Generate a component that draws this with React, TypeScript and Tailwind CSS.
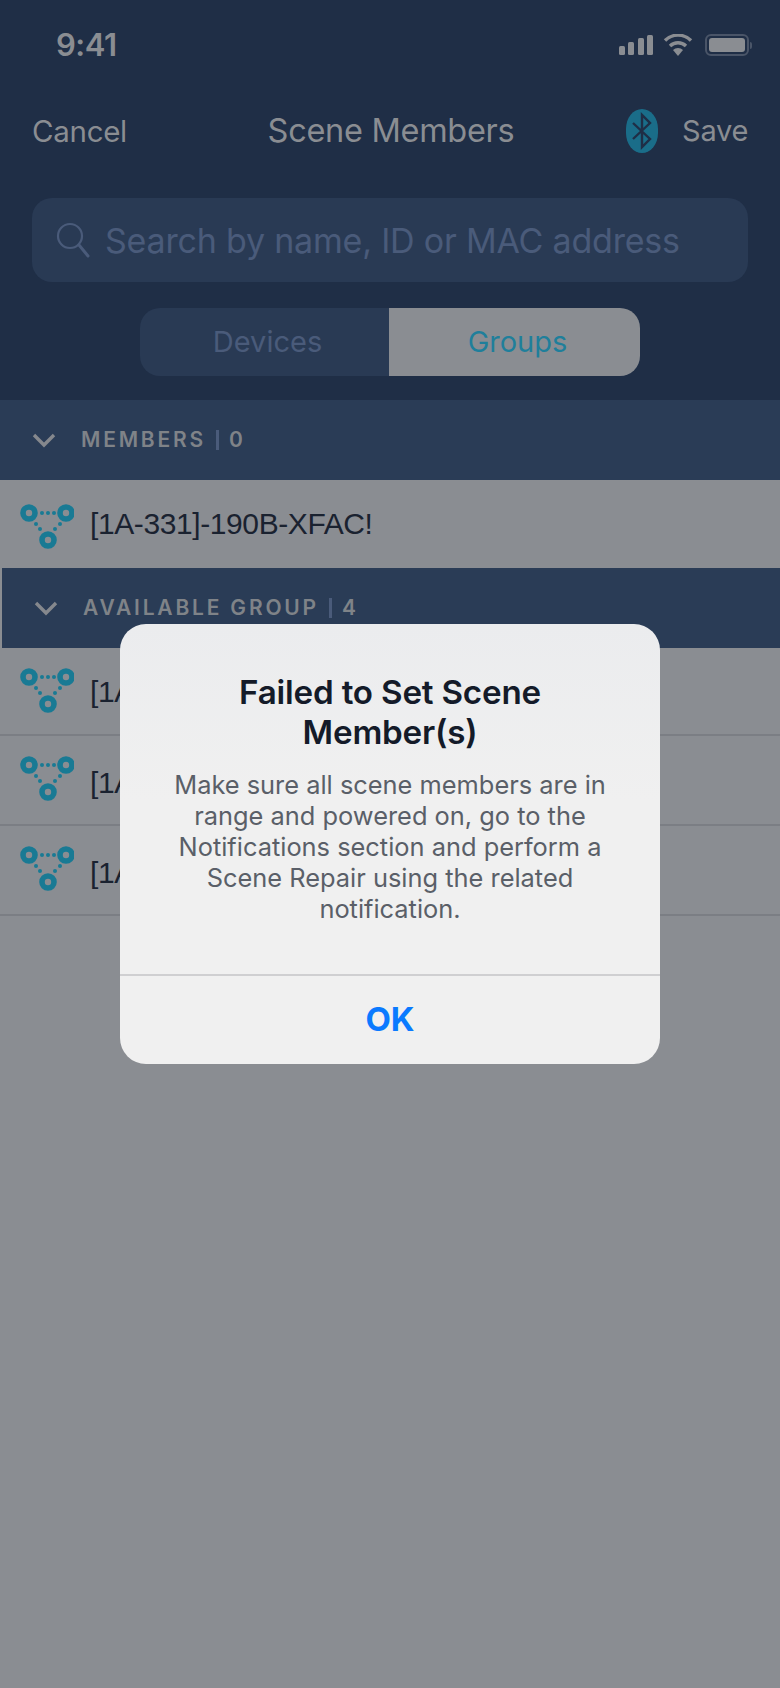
const sans = "font-['Inter','Noto_Sans',sans-serif]";

function GroupIcon({ className }: { className: string }) {
  return (
    <svg width="54" height="46" viewBox="0 0 54 46" className={className}>
      <circle cx="9" cy="9" r="6" fill="none" stroke="#197a94" strokeWidth="5.6" />
      <circle cx="46" cy="9" r="6" fill="none" stroke="#197a94" strokeWidth="5.6" />
      <circle cx="28" cy="36" r="6" fill="none" stroke="#197a94" strokeWidth="5.6" />
      <g fill="#197a94">
        <circle cx="22" cy="9" r="2" />
        <circle cx="28" cy="9" r="2" />
        <circle cx="34" cy="9" r="2" />
        <circle cx="16" cy="20" r="2" />
        <circle cx="20" cy="25" r="2" />
        <circle cx="40" cy="20" r="2" />
        <circle cx="35" cy="25" r="2" />
      </g>
    </svg>
  );
}

function Chevron() {
  return (
    <svg width="24" height="16" viewBox="0 0 24 16" className="shrink-0">
      <path d="M2 3l10 10L22 3" fill="none" stroke="#85888d" strokeWidth="3.4" />
    </svg>
  );
}

function SectionHeader({ label, count, inset }: { label: string; count: string; inset?: boolean }) {
  return (
    <div className={inset ? "ml-[2px] flex h-[80px] items-center gap-[25px] bg-[#2a3c56] pl-[32px]" : "flex h-[80px] items-center gap-[25px] bg-[#2a3c56] pl-[32px]"}>
      <Chevron />
      <div className="flex items-center text-[21px] font-semibold tracking-[2.8px] text-[#7f8388]">
        <span>{label}</span>
        <span className="mx-[10px] h-[20px] w-[3px] bg-[#4a5b7a]" />
        <span>{count}</span>
      </div>
    </div>
  );
}

const rowStyles = {
  member: { box: "flex h-[88px] items-center gap-[16px] pl-[20px]", icon: "mt-[6px] shrink-0", label: "-mt-[2px]" },
  first: { box: "flex h-[88px] items-center gap-[16px] border-b-2 border-[#7b7e84] pl-[20px]", icon: "shrink-0", label: "" },
  tall: { box: "flex h-[90px] items-center gap-[16px] border-b-2 border-[#7b7e84] pl-[20px]", icon: "mb-[2px] shrink-0", label: "mt-[4px]" },
};

function Row({ text, kind }: { text: string; kind: keyof typeof rowStyles }) {
  const s = rowStyles[kind];
  return (
    <div className={s.box}>
      <GroupIcon className={s.icon} />
      <span className={`font-['Liberation_Sans',sans-serif] text-[30px] tracking-[-0.4px] text-[#1a2230] ${s.label}`}>{text}</span>
    </div>
  );
}

export default function App() {
  return (
    <div className={`relative h-[1688px] w-[780px] overflow-hidden bg-[#8a8d92] ${sans}`}>
      <div className="bg-[#1f2e46] px-[32px]">
        <div className="-mr-[4px] flex h-[90px] items-center justify-between pl-[24px]">
          <span className="text-[31px] font-semibold tracking-[-0.5px] text-[#8a8d92]">9:41</span>
          <div className="flex items-center gap-[10px]">
            <div className="flex h-[20px] items-end gap-[3.5px]">
              <div className="h-[9px] w-[6px] rounded-[1.5px] bg-[#8a8d92]" />
              <div className="h-[13px] w-[6px] rounded-[1.5px] bg-[#8a8d92]" />
              <div className="h-[17px] w-[6px] rounded-[1.5px] bg-[#8a8d92]" />
              <div className="h-[20px] w-[6px] rounded-[1.5px] bg-[#8a8d92]" />
            </div>
            <svg width="30" height="22" viewBox="0 0 30 22">
              <path d="M15 22l-5-6a7 7 0 0 1 10 0z" fill="#8a8d92" />
              <path d="M7 12a11.5 11.5 0 0 1 16 0" fill="none" stroke="#8a8d92" strokeWidth="3.4" />
              <path d="M2 6.500a18.500 18.500 0 0 1 26 0" fill="none" stroke="#8a8d92" strokeWidth="3.4" />
            </svg>
            <div className="ml-[2px] flex items-center">
              <div className="flex h-[22px] w-[44px] items-center rounded-[6px] border-2 border-[#4a5568] p-[2px]">
                <div className="h-full w-full rounded-[3px] bg-[#8a8d92]" />
              </div>
              <div className="ml-[1px] h-[7px] w-[2px] rounded-r-[2px] bg-[#4a5568]" />
            </div>
          </div>
        </div>
        <div className="flex h-[82px] items-center justify-between">
          <span className="w-[200px] text-[29.500px] tracking-[-0.3px] text-[#8a8d92]">Cancel</span>
          <span className="pl-[2px] text-[32.500px] tracking-[-0.3px] text-[#8a8d92]">Scene Members</span>
          <div className="flex w-[200px] items-center justify-end gap-[24px]">
            <svg width="32" height="44" viewBox="0 0 32 44">
              <rect width="32" height="44" rx="16" ry="20" fill="#1a6d89" />
              <path d="M7 14l17 16-8 8V6l8 8-17 16" fill="none" stroke="#1f2e46" strokeWidth="2.4" />
            </svg>
            <span className="text-[29px] tracking-[-0.3px] text-[#8a8d92]">Save</span>
          </div>
        </div>
        <div className="mt-[26px] flex h-[84px] items-center gap-[15px] rounded-[20px] bg-[#293a54] pl-[24px]">
          <svg width="34" height="36" viewBox="0 0 34 36" className="shrink-0">
            <circle cx="14" cy="14" r="12" fill="none" stroke="#4a5b7a" strokeWidth="2.2" />
            <path d="M23 23l9 11" fill="none" stroke="#4a5b7a" strokeWidth="3" strokeLinecap="round" />
          </svg>
          <span className="text-[34px] tracking-[-0.2px] text-[#4a5b7a]">Search by name, ID or MAC address</span>
        </div>
        <div className="flex justify-center pb-[24px] pt-[26px]">
          <div className="flex h-[68px] w-[500px] overflow-hidden rounded-[20px] text-[29px]">
            <div className="flex w-[249px] items-center justify-center bg-[#293a54] pl-[6px] text-[#4a5b7a]">Devices</div>
            <div className="flex flex-1 items-center justify-center bg-[#8a8d92] pl-[6px] text-[#1f7f9b]">Groups</div>
          </div>
        </div>
      </div>

      <SectionHeader label="MEMBERS" count="0" />
      <Row text="[1A-331]-190B-XFAC!" kind="member" />
      <SectionHeader label="AVAILABLE GROUP" count="4" inset />
      <Row text="[1A-331]-190B-XFAC!" kind="first" />
      <Row text="[1A-331]-190B-XFAC!" kind="tall" />
      <Row text="[1A-331]-190B-XFAC!" kind="tall" />

      <div className="absolute left-[120px] top-[624px] flex h-[440px] w-[540px] flex-col rounded-[26px] bg-gradient-to-b from-[#ebecee] to-[#f0f0f0] to-40%">
        <div className="flex-1 px-[40px] pt-[48px] text-center">
          <h1 className="mx-auto w-[360px] text-[33.200px] font-semibold leading-[40px] tracking-[-0.2px] text-[#141b29]">
            Failed to Set Scene Member(s)
          </h1>
          <p className="mt-[17px] text-[25.400px] leading-[31px] text-[#5a5f68]">
            Make sure all scene members are in range and powered on, go to the Notifications section and perform a Scene Repair using the related notification.
          </p>
        </div>
        <div className="flex h-[90px] items-center justify-center border-t-2 border-[#cfcfd1] text-[33px] font-bold text-[#0a7aff]">
          OK
        </div>
      </div>
    </div>
  );
}
